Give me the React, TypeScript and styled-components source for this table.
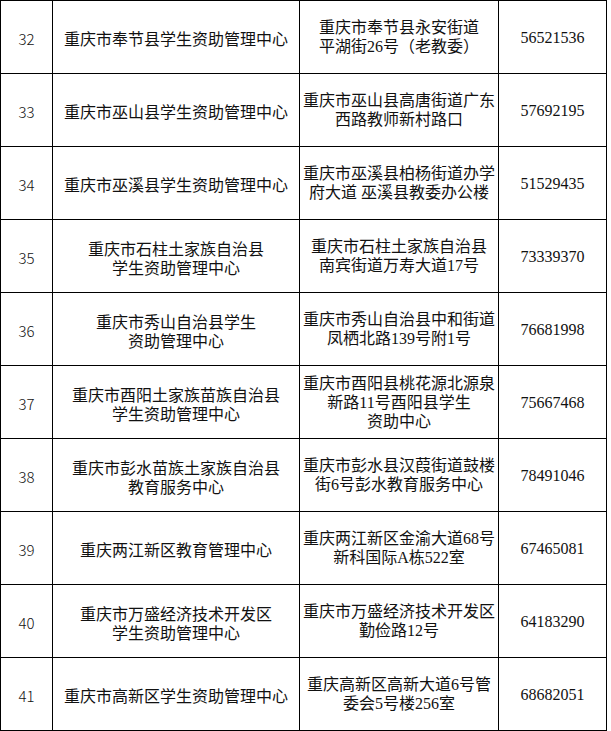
import React from 'react';
import styled, { createGlobalStyle } from 'styled-components';

const GlobalStyle = createGlobalStyle`
  html, body {
    margin: 0;
    padding: 0;
    background: #fff;
  }
`;

const Table = styled.table`
  border-collapse: collapse;
  table-layout: fixed;
  color: #111;
  font-size: 16px;
`;

const Row = styled.tr`
  height: 73px;
`;

const Cell = styled.td<{ $width: number }>`
  width: ${(p) => p.$width}px;
  min-width: ${(p) => p.$width}px;
  max-width: ${(p) => p.$width}px;
  box-sizing: border-box;
  border: 1px solid #000;
  padding: 0;
  text-align: center;
  vertical-align: middle;
  line-height: 19px;
  white-space: nowrap;
  overflow: hidden;
`;

const NumCell = styled(Cell)`
  font-family: 'Noto Sans CJK SC', 'DejaVu Sans', sans-serif;
  font-size: 15px;
  font-weight: 300;
  padding-top: 3px;
`;

const NameCell = styled(Cell)`
  font-family: 'Noto Sans CJK SC', sans-serif;
  padding-top: 3px;
`;

const AddrCell = styled(Cell)`
  font-family: 'Liberation Serif', 'Noto Sans CJK SC', serif;
`;

const PhoneCell = styled(Cell)`
  font-family: 'Liberation Serif', serif;
`;

type Entry = {
  no: number;
  name: string[];
  addr: string[];
  phone: string;
};

const rows: Entry[] = [
  { no: 32, name: ['重庆市奉节县学生资助管理中心'], addr: ['重庆市奉节县永安街道', '平湖街26号（老教委）'], phone: '56521536' },
  { no: 33, name: ['重庆市巫山县学生资助管理中心'], addr: ['重庆市巫山县高唐街道广东', '西路教师新村路口'], phone: '57692195' },
  { no: 34, name: ['重庆市巫溪县学生资助管理中心'], addr: ['重庆市巫溪县柏杨街道办学', '府大道 巫溪县教委办公楼'], phone: '51529435' },
  { no: 35, name: ['重庆市石柱土家族自治县', '学生资助管理中心'], addr: ['重庆市石柱土家族自治县', '南宾街道万寿大道17号'], phone: '73339370' },
  { no: 36, name: ['重庆市秀山自治县学生', '资助管理中心'], addr: ['重庆市秀山自治县中和街道', '凤栖北路139号附1号'], phone: '76681998' },
  { no: 37, name: ['重庆市酉阳土家族苗族自治县', '学生资助管理中心'], addr: ['重庆市酉阳县桃花源北源泉', '新路11号酉阳县学生', '资助中心'], phone: '75667468' },
  { no: 38, name: ['重庆市彭水苗族土家族自治县', '教育服务中心'], addr: ['重庆市彭水县汉葭街道鼓楼', '街6号彭水教育服务中心'], phone: '78491046' },
  { no: 39, name: ['重庆两江新区教育管理中心'], addr: ['重庆两江新区金渝大道68号', '新科国际A栋522室'], phone: '67465081' },
  { no: 40, name: ['重庆市万盛经济技术开发区', '学生资助管理中心'], addr: ['重庆市万盛经济技术开发区', '勤俭路12号'], phone: '64183290' },
  { no: 41, name: ['重庆市高新区学生资助管理中心'], addr: ['重庆高新区高新大道6号管', '委会5号楼256室'], phone: '68682051' },
];

function Lines({ lines }: { lines: string[] }) {
  return (
    <>
      {lines.map((l, i) => (
        <React.Fragment key={i}>
          {i > 0 && <br />}
          {l}
        </React.Fragment>
      ))}
    </>
  );
}

export default function App() {
  return (
    <>
      <GlobalStyle />
      <Table>
        <tbody>
          {rows.map((r) => (
            <Row key={r.no}>
              <NumCell $width={52}>{r.no}</NumCell>
              <NameCell $width={247}>
                <Lines lines={r.name} />
              </NameCell>
              <AddrCell $width={199}>
                <Lines lines={r.addr} />
              </AddrCell>
              <PhoneCell $width={108}>{r.phone}</PhoneCell>
            </Row>
          ))}
        </tbody>
      </Table>
    </>
  );
}
